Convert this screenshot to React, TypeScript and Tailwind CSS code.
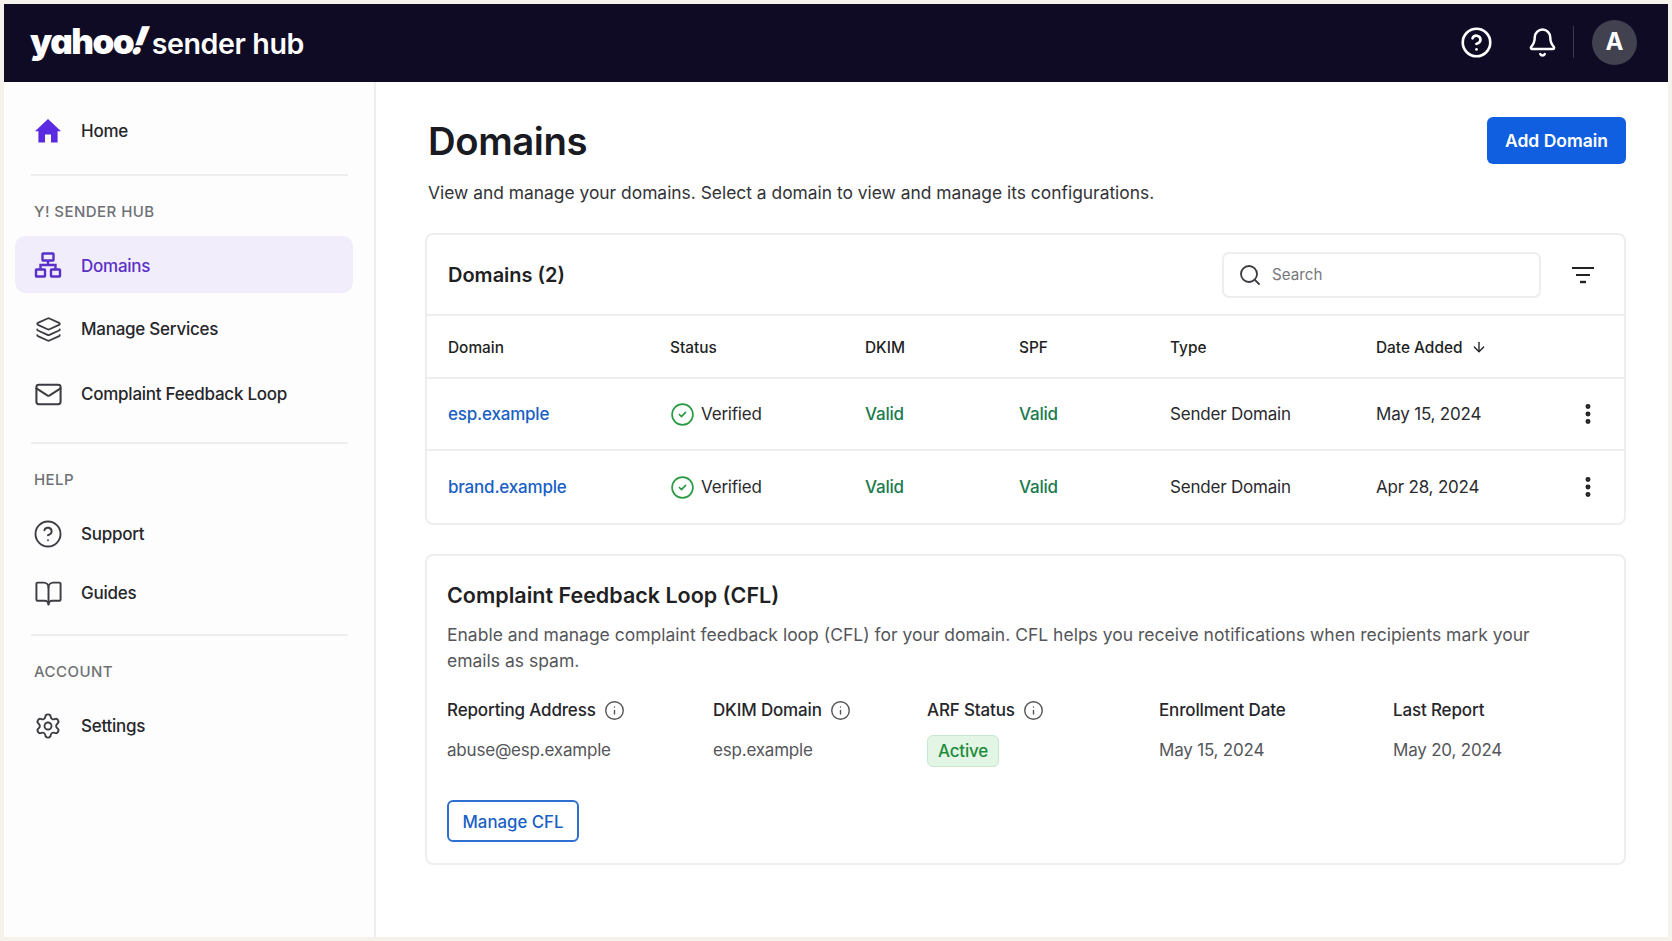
import React from "react";
import { Layers, Mail, CircleHelp, BookOpen, Settings, Bell, Search, MoreVertical, Info, CircleCheck, ArrowDown } from "lucide-react";

const HomeIcon = () => (
  <svg width="28" height="26" viewBox="0 0 28 26" fill="#5a2be0" className="shrink-0">
    <path d="M14 1 L27 13.2 H23.6 V24.5 H17 V16.5 H11 V24.5 H4.4 V13.2 H1 Z" />
  </svg>
);

const NetworkIcon = () => (
  <svg width="28" height="26" viewBox="0 0 28 26" fill="none" stroke="#5a30c8" strokeWidth="2.4" className="shrink-0">
    <rect x="8.5" y="1.5" width="11" height="7" rx="0.5" />
    <rect x="2" y="17.5" width="9" height="7" rx="0.5" />
    <rect x="17" y="17.5" width="9" height="7" rx="0.5" />
    <path d="M14 8.5 V13 M6.5 17.5 V13 H21.5 V17.5" />
  </svg>
);

const FilterLines = () => (
  <svg width="24" height="18" viewBox="0 0 24 18" fill="none" stroke="#222" strokeWidth="2" className="shrink-0">
    <path d="M1 2 H23 M5 9 H19" />
    <path d="M9 16 H15" strokeWidth="2.4" />
  </svg>
);

function NavItem({ icon, label, active, cls }: { icon: React.ReactNode; label: string; active?: boolean; cls: string }) {
  return (
    <div className={`flex items-center mx-[11px] w-[338px] rounded-[10px] pl-[17px] ${active ? "bg-[#f1edfb] text-[#5a30c8]" : "text-[#26262b]"} ${cls}`}>
      <span className="w-[32px] flex justify-center shrink-0">{icon}</span>
      <span className={`ml-[17px] text-[17px] leading-[24px] font-[450] tracking-[-0.25px] ${active ? "pt-[2px]" : ""}`}>{label}</span>
    </div>
  );
}

const Divider = ({ cls }: { cls: string }) => <div className={`h-[2px] ml-[27px] w-[317px] bg-[#eceef0] ${cls}`} />;
const Section = ({ label, cls }: { label: string; cls: string }) => (
  <div className={`ml-[30px] text-[15px] leading-[20px] font-medium tracking-[0.45px] text-[#6f7175] ${cls}`}>{label}</div>
);

const cols = "grid grid-cols-[222px_195px_154px_151px_206px_1fr] items-center pl-[21px]";

function Row({ domain, date, last }: { domain: string; date: string; last?: boolean }) {
  return (
    <div className={`${cols} h-[72px] text-[17px] tracking-[-0.2px] ${last ? "" : "border-b-2 border-[#eceef0]"}`}>
      <span className="pt-[2px] text-[#1a5fc4] font-medium">{domain}</span>
      <span className="flex items-center gap-[6px] text-[#2a2a2e]">
        <CircleCheck size={25} strokeWidth={1.6} color="#2b9a45" />
        <span className="pt-[2px]">Verified</span>
      </span>
      <span className="pt-[2px] text-[#1a7a4c] font-medium">Valid</span>
      <span className="pt-[2px] text-[#1a7a4c] font-medium">Valid</span>
      <span className="pt-[2px] text-[#2a2a2e]">Sender Domain</span>
      <span className="flex items-center justify-between pr-[23px] text-[#2a2a2e]">
        <span className="pt-[2px]">{date}</span>
        <MoreVertical size={26} strokeWidth={2.6} color="#222" />
      </span>
    </div>
  );
}

const Label = ({ text, info }: { text: string; info?: boolean }) => (
  <span className="flex items-center gap-[8px] text-[17px] tracking-[-0.15px] font-medium text-[#26262b]">
    {text}
    {info && <Info size={21} strokeWidth={1.6} color="#555" className="-mt-[1px]" />}
  </span>
);

export default function App() {
  return (
    <div className="w-[1672px] h-[941px] bg-[#f5f2ec] p-[4px] overflow-hidden font-['Inter','Liberation_Sans',sans-serif]">
      <div className="w-[1664px] h-[933px] bg-white flex flex-col">
        <header className="h-[78px] bg-[#0f0b25] flex items-center justify-between pl-[26px] pr-[31px] pb-[2px] text-white shrink-0">
          <div className="flex items-baseline">
            <span className="text-[35px] leading-[40px] font-black tracking-[-1.5px] [font-feature-settings:'cv11']">yahoo</span>
            <span className="inline-block -skew-x-12 text-[38px] leading-[40px] font-black italic mr-[4px]">!</span>
            <span className="text-[28.6px] leading-[40px] font-semibold tracking-[-0.4px]">sender hub</span>
          </div>
          <div className="flex items-center">
            <CircleHelp size={33} strokeWidth={1.9} />
            <Bell size={31} strokeWidth={1.9} className="ml-[34px]" />
            <div className="w-[1px] h-[32px] bg-[#3a3850] ml-[15px]" />
            <div className="w-[45px] h-[45px] rounded-full bg-[#41414f] flex items-center justify-center ml-[18px] text-[24px] font-bold">A</div>
          </div>
        </header>
        <div className="flex flex-1 min-h-0">
          <aside className="w-[372px] border-r-2 border-[#eceef0] bg-[#fdfdfd] shrink-0">
            <NavItem cls="h-[50px] mt-[24px]" icon={<HomeIcon />} label="Home" />
            <Divider cls="mt-[18px]" />
            <Section cls="mt-[26px]" label="Y! SENDER HUB" />
            <NavItem active cls="h-[57px] mt-[14px]" icon={<NetworkIcon />} label="Domains" />
            <NavItem cls="h-[60px] mt-[6px]" icon={<Layers size={27} strokeWidth={1.6} color="#3c3c42" />} label="Manage Services" />
            <NavItem cls="h-[60px] mt-[5px]" icon={<Mail size={29} strokeWidth={1.7} color="#3c3c42" />} label="Complaint Feedback Loop" />
            <Divider cls="mt-[18px]" />
            <Section cls="mt-[26px]" label="HELP" />
            <NavItem cls="h-[50px] mt-[19px]" icon={<CircleHelp size={30} strokeWidth={1.5} color="#3c3c42" />} label="Support" />
            <NavItem cls="h-[50px] mt-[9px]" icon={<BookOpen size={29} strokeWidth={1.6} color="#3c3c42" />} label="Guides" />
            <Divider cls="mt-[16px]" />
            <Section cls="mt-[26px]" label="ACCOUNT" />
            <NavItem cls="h-[50px] mt-[19px]" icon={<Settings size={28} strokeWidth={1.6} color="#3c3c42" />} label="Settings" />
          </aside>
          <main className="flex-1 pl-[49px] pr-[42px] pt-[35px] bg-white">
            <div className="flex items-start justify-between">
              <h1 className="mt-[1px] pl-[3px] text-[38.3px] leading-[46px] font-semibold tracking-[-0.4px] text-[#1a1a22]">Domains</h1>
              <button className="w-[139px] h-[47px] pt-[2px] rounded-[6px] bg-[#0f5fe0] text-white text-[17.5px] font-semibold">Add Domain</button>
            </div>
            <p className="pl-[3px] mt-[16px] text-[17.4px] leading-[26px] text-[#333338]">View and manage your domains. Select a domain to view and manage its configurations.</p>

            <section className="mt-[27px] h-[292px] border-2 border-[#eceef0] rounded-[8px] bg-white">
              <div className="h-[81px] border-b-2 border-[#eceef0] flex items-center pl-[21px]">
                <span className="text-[20px] font-semibold text-[#1f1f24]">Domains (2)</span>
                <div className="ml-auto w-[319px] h-[46px] rounded-[7px] border-2 border-[#eceef0] flex items-center pl-[14px] gap-[10px]">
                  <Search size={24} strokeWidth={1.8} color="#3a3a40" />
                  <span className="pt-[2px] text-[15.2px] text-[#77787c]">Search</span>
                </div>
                <span className="ml-[30px] mr-[29px]"><FilterLines /></span>
              </div>
              <div className={`${cols} h-[63px] border-b-2 border-[#eceef0] text-[15.4px] font-medium text-[#1f1f24]`}>
                <span className="pt-[2px]">Domain</span>
                <span className="pt-[2px]">Status</span>
                <span className="pt-[2px]">DKIM</span>
                <span className="pt-[2px]">SPF</span>
                <span className="pt-[2px]">Type</span>
                <span className="pt-[2px] flex items-center gap-[9px]">Date Added <ArrowDown size={16} strokeWidth={2} /></span>
              </div>
              <Row domain="esp.example" date="May 15, 2024" />
              <Row domain="brand.example" date="Apr 28, 2024" last />
            </section>

            <section className="mt-[29px] h-[311px] border-2 border-[#eceef0] rounded-[8px] bg-white pl-[20px] pt-[24px]">
              <h2 className="text-[21.5px] leading-[30px] font-semibold text-[#1f1f24]">Complaint Feedback Loop (CFL)</h2>
              <p className="mt-[12px] w-[1130px] text-[17.5px] leading-[26px] text-[#55565a]">Enable and manage complaint feedback loop (CFL) for your domain. CFL helps you receive notifications when recipients mark your emails as spam.</p>
              <div className="mt-[24px] grid grid-cols-[266px_214px_232px_234px_1fr] grid-rows-[26px_26px] gap-y-[14px] items-center text-[17px] tracking-[-0.2px]">
                <Label text="Reporting Address" info />
                <Label text="DKIM Domain" info />
                <Label text="ARF Status" info />
                <Label text="Enrollment Date" />
                <Label text="Last Report" />
                <span className="text-[#55565a]">abuse@esp.example</span>
                <span className="text-[#55565a]">esp.example</span>
                <span className="w-[72px] h-[32px] pt-[1px] flex items-center justify-center rounded-[6px] bg-[#e3f5e5] border border-[#c7e8cc] text-[#1e8a3c] font-medium">Active</span>
                <span className="text-[#55565a]">May 15, 2024</span>
                <span className="text-[#55565a]">May 20, 2024</span>
              </div>
              <button className="mt-[36px] w-[132px] h-[42px] pt-[3px] rounded-[6px] border-2 border-[#2f6fd0] text-[#1a5fc4] text-[16.8px] font-medium">Manage CFL</button>
            </section>
          </main>
        </div>
      </div>
    </div>
  );
}
